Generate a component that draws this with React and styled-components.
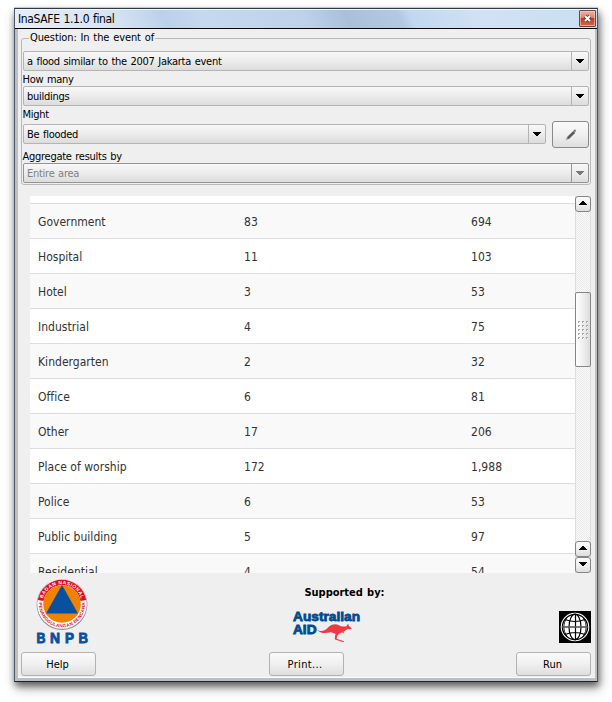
import React from "react";
import styled, { createGlobalStyle, css } from "styled-components";

const Global = createGlobalStyle`
  * { box-sizing: border-box; }
  body { margin: 0; background: #fff; overflow: hidden; }
`;

const ui = `"DejaVu Sans Condensed", "DejaVu Sans", sans-serif`;

const Page = styled.main`
  width: 612px;
  height: 702px;
  padding: 8px 14px 0;
  font: 11px/14px ${ui};
  font-stretch: condensed;
  letter-spacing: -0.27px;
  word-spacing: 0.8px;
  color: #000;
  white-space: nowrap;
`;

const Window = styled.section`
  width: 584px;
  height: 674px;
  border: 1px solid #303943;
  border-bottom-color: #222;
  border-left-color: #4c5865;
  border-right-color: #4c5865;
  background: #bcc0c3;
  padding: 0 1px 3px;
  display: flex;
  flex-direction: column;
  box-shadow: 0 -1px 0 #c8ccd0, 1px 4px 7px rgba(0, 0, 0, 0.55), 2px 7px 12px rgba(0, 0, 0, 0.22);
`;

const TitleBar = styled.header`
  height: 20px;
  flex: none;
  margin: 0 -1px;
  padding: 0 1px 0 3px;
  display: flex;
  justify-content: space-between;
  border-top: 1px solid #f3f8fc;
  border-bottom: 1px solid #000;
  background: linear-gradient(65deg, #e6eef7 0%, #d5e3f1 18%, #bbd1ea 26%, #c5d9ee 33%, #bdd2e9 50%, #a9c0db 57%, #b2c9e4 66%, #c1d8f0 68%, #d1e2f2 80%, #c8dff1 100%);
`;

const Title = styled.h1`
  margin: 1px 0 0;
  font: inherit;
  font-size: 12px;
  line-height: 16px;
  letter-spacing: -0.36px;
`;

const Close = styled.button`
  width: 17px;
  height: 17px;
  padding: 0;
  display: grid;
  place-items: center;
  border: 1px solid #6a4644;
  border-radius: 1px;
  background: linear-gradient(#eeb3a4, #de8068 45%, #bd3d20 50%, #d5694d);
  box-shadow: inset 0 0 0 1px rgba(255, 210, 195, 0.55);
`;

const Client = styled.div`
  flex: 1;
  min-height: 0;
  margin: 0 1px 0 2px;
  padding: 8px 3px 2px 3px;
  background: #efefef;
  border-bottom: 1px solid #fafafa;
  display: flex;
  flex-direction: column;
`;

const Group = styled.fieldset`
  flex: none;
  height: 154px;
  width: 570px;
  min-width: 0;
  margin: -6px 0 0;
  padding: 6px 1px 0;
  border: 1px solid #b9b9b9;
  border-radius: 3px;
  display: flex;
  flex-direction: column;
`;

const Legend = styled.legend`
  height: 14px;
  margin-left: 6px;
  padding: 0 1px;
  letter-spacing: -0.1px;
`;

const Label = styled.label`
  flex: none;
  height: ${(p) => p.$h}px;
  padding-top: ${(p) => p.$top}px;
  margin-left: -0.5px;
`;

const Select = styled.div`
  flex: none;
  width: ${(p) => p.$w || 566}px;
  height: 20px;
  display: flex;
  justify-content: space-between;
  align-items: center;
  padding-left: 3px;
  border: 1px solid ${(p) => (p.$off ? "#949494" : "#b4b4b4")};
  border-radius: 2px;
  background: linear-gradient(#f8f8f8, #ececec 50%, #dcdcdc);
  color: ${(p) => (p.$off ? "#808080" : "#000")};
`;

const Value = styled.span`
  padding-top: 2px;
`;

const Drop = styled.span`
  width: 17px;
  height: 18px;
  display: grid;
  place-items: center;
  border-left: 1px solid ${(p) => (p.$off ? "#949494" : "#b4b4b4")};
`;

const SelectRow = styled.div`
  flex: none;
  height: 27px;
  display: flex;
  align-items: flex-start;
  gap: 6px;
  ${Select} {
    margin-top: 3px;
  }
`;

const face = css`
  padding: 0;
  border-radius: 3px;
  background: linear-gradient(#fafafa, #f0f0f0 50%, #dedede);
  font: inherit;
  letter-spacing: inherit;
  color: inherit;
`;

const EditButton = styled.button`
  ${face}
  width: 37px;
  height: 27px;
  display: grid;
  place-items: center;
  border: 1px solid #8a8a8a;
`;

const Results = styled.div`
  flex: none;
  width: 562px;
  height: 377px;
  margin: 11px 0 0 9px;
  display: flex;
`;

const Table = styled.div`
  width: 545px;
  overflow: hidden;
  background: #fff;
  padding-top: 7px;
`;

const Row = styled.div`
  height: 35px;
  display: grid;
  grid-template-columns: 206px 227px 1fr;
  align-items: center;
  padding-left: 8px;
  padding-top: 1px;
  border-top: 1px solid #dcdcdc;
  background: ${(p) => (p.$odd ? "#f9f9f9" : "#fff")};
  color: #333;
  font-size: 12px;
  letter-spacing: 0.03px;
  word-spacing: 0;
`;

const ScrollBar = styled.div`
  width: 16px;
  display: flex;
  flex-direction: column;
  box-shadow: inset 1px 0 #ddd, inset -1px 0 #ddd;
  background: repeating-conic-gradient(#e9e9e9 0 25%, #fafafa 0 50%) 0 0 / 2px 2px;
`;

const Arrow = styled.button`
  ${face}
  flex: none;
  height: 16px;
  padding-bottom: 2px;
  display: grid;
  place-items: center;
  border: 1px solid #858585;
`;

const Thumb = styled.div`
  flex: none;
  height: 75px;
  margin: 80px 0 174px;
  display: grid;
  place-items: center;
  border: 1px solid #858585;
  border-radius: 2px;
  background: linear-gradient(90deg, #fff, #efefef 50%, #dcdcdc);
`;

const Footer = styled.footer`
  height: 79px;
  width: 570px;
  flex: none;
  display: grid;
  grid-template-columns: 75px 420px 75px;
`;

const Center = styled.div`
  display: flex;
  flex-direction: column;
  align-items: center;
  padding: 13px 0 0 77px;
`;

const Supported = styled.strong`
  height: 24px;
  font-weight: bold;
  letter-spacing: -0.02px;
`;

const AidLogo = styled.svg`
  margin-right: 36px;
`;

const Actions = styled.div`
  width: 570px;
  display: flex;
  justify-content: space-between;
`;

const Action = styled.button`
  ${face}
  width: 75px;
  height: 24px;
  padding: 1px 2px 0 0;
  letter-spacing: ${(p) => p.$track || 0}px;
  border: 1px solid #b2b2b2;
`;

const BnpbSlot = styled.div`
  padding: 5px 0 0 14px;
`;

const GlobeSlot = styled.div`
  padding: 38px 0 0 43px;
`;

const Triangle = ({ up, color = "#000" }) => (
  <svg width="8" height="4" viewBox="0 0 8 4" fill={color} shapeRendering="crispEdges">
    {up ? <path d="M3 0h2v1h1v1h1v1h1v1H0V3h1V2h1V1h1z" /> : <path d="M0 0h8v1H7v1H6v1H5v1H3V3H2V2H1V1H0z" />}
  </svg>
);

const Combo = ({ children, off, w }) => (
  <Select $off={off} $w={w}>
    <Value>{children}</Value>
    <Drop $off={off}><Triangle color={off ? "#777" : "#000"} /></Drop>
  </Select>
);

const Pencil = () => (
  <svg width="12" height="12" viewBox="0 0 12 12">
    <path d="M1.5 10.5l.8-2.8 6-5.6 1.900 1.900-6 5.700z" fill="#5c5c5c" />
    <path d="M8.300 1.700l1-1c.8-.6 2.200.8 1.600 1.600l-1 1z" fill="#777" />
    <path d="M.5 11.500l1.200-3 1.700 1.800z" fill="#aaa" />
  </svg>
);

const Grip = () => (
  <svg width="10" height="18" shapeRendering="crispEdges">
    {[0, 4, 8, 12, 16].map((y) =>
      [0, 4, 8].map((x) => (
        <g key={`${x}-${y}`}>
          <path d={`M${x} ${y}h2v1h-1v1h-1z`} fill="#aaa" />
          <path d={`M${x + 1} ${y + 1}h1v1h-1z`} fill="#fff" />
        </g>
      ))
    )}
  </svg>
);

const Bnpb = () => (
  <svg width="54" height="68" viewBox="0 0 54 68" fontFamily="Liberation Sans, sans-serif" fontWeight="bold" wordSpacing="0">
    <defs>
      <path id="upper" d="M7.2 26A19.8 19.8 0 0 1 46.8 26" />
      <path id="lower" d="M4.3 22A23.1 23.1 0 1 0 49.7 22" />
    </defs>
    <circle cx="27" cy="26.6" r="25.4" fill="#8a8a8a" />
    <circle cx="27" cy="26" r="24.8" fill="#fff" />
    <path d="M2.8 22A24.6 24.6 0 0 1 51.2 22L45.4 23A18.6 18.6 0 0 0 8.6 23z" fill="#e30b1c" />
    <circle cx="27" cy="26" r="18.8" fill="#f08200" />
    <path d="M27 7L43 35.500H11z" fill="#0850a0" />
    <text fontSize="4.9" fill="#fff" letterSpacing="0"><textPath href="#upper" startOffset="50%" textAnchor="middle" textLength="51">BADAN NASIONAL</textPath></text>
    <text fontSize="4.6" fill="#e30b1c" letterSpacing="0"><textPath href="#lower" startOffset="50%" textAnchor="middle" textLength="76">PENANGGULANGAN BENCANA</textPath></text>
    <text y="64.5" fontSize="14.5" fill="#0850a0" stroke="#0850a0" strokeWidth="0.9" letterSpacing="0">
      <tspan x="1.5" textLength="9" lengthAdjust="spacingAndGlyphs">B</tspan>
      <tspan x="15" textLength="10" lengthAdjust="spacingAndGlyphs">N</tspan>
      <tspan x="30" textLength="9" lengthAdjust="spacingAndGlyphs">P</tspan>
      <tspan x="43.5" textLength="9.5" lengthAdjust="spacingAndGlyphs">B</tspan>
    </text>
  </svg>
);

const AustralianAid = () => (
  <AidLogo width="70" height="34" viewBox="0 0 70 34" fontFamily="Liberation Sans, sans-serif" fontWeight="bold" fill="#004b91">
    <text x="1" y="11" fontSize="13" stroke="#004b91" strokeWidth="0.8" textLength="67" lengthAdjust="spacingAndGlyphs" letterSpacing="0">Australian</text>
    <text x="1" y="24" fontSize="13.5" stroke="#004b91" strokeWidth="0.9" textLength="23.5" lengthAdjust="spacingAndGlyphs" letterSpacing="0">AID</text>
    <path d="M25 20.300C30 22 33.500 20.500 36 17.600C39.500 14 43.500 13.600 47 15.200C49.500 16.600 52 16.700 54 16.400L56.200 13.800L56.800 16L60 18.200L58 19.200L55.500 19L53.500 20.500L51.500 21.700L52.500 23.800L50 22.300C47.500 24 45.500 24.200 45 26.800L44.600 28.700L52 31.200L51.500 32.200L43 29.500L42.800 27.700L43.500 23.800L39 22.200C34.500 23 30.500 24.400 25 20.300z" fill="#ee3a43" />
  </AidLogo>
);

const Globe = () => (
  <svg width="32" height="32" viewBox="0 0 32 32">
    <path d="M0 0h32v32H0z" fill="#000" />
    <circle cx="16" cy="16" r="14.3" fill="#fff" />
    <circle cx="16" cy="16" r="12.6" fill="#fff" stroke="#000" strokeWidth="1.3" />
    <g fill="none" stroke="#000" strokeWidth="1.2">
      <path d="M16.500 3v26M6 8.500Q16 12.500 26 8.500M6 23.500Q16 19.500 26 23.500" />
      <ellipse cx="16" cy="16" rx="6" ry="12.8" />
      <path d="M8 6.500Q1.500 16 8 25.500M24 6.500Q30.500 16 24 25.500" strokeWidth="0.8" />
    </g>
    <path d="M3 16h26" stroke="#555" strokeWidth="1.6" />
  </svg>
);

const rows = [
  ["Government", "83", "694"],
  ["Hospital", "11", "103"],
  ["Hotel", "3", "53"],
  ["Industrial", "4", "75"],
  ["Kindergarten", "2", "32"],
  ["Office", "6", "81"],
  ["Other", "17", "206"],
  ["Place of worship", "172", "1,988"],
  ["Police", "6", "53"],
  ["Public building", "5", "97"],
  ["Residential", "4", "54"],
];

export default function App() {
  return (
    <Page>
      <Global />
      <Window>
        <TitleBar>
          <Title>InaSAFE 1.1.0 final</Title>
          <Close aria-label="Close">
            <svg width="9" height="9" viewBox="0 0 9 9">
              <path d="M2 2l5 5M7 2L2 7" stroke="#503a42" strokeWidth="3.6" />
              <path d="M2 2l5 5M7 2L2 7" stroke="#fff" strokeWidth="1.9" />
            </svg>
          </Close>
        </TitleBar>
        <Client>
          <Group>
            <Legend>Question: In the event of</Legend>
            <Combo>a flood similar to the 2007 Jakarta event</Combo>
            <Label $h={15} $top={2}>How many</Label>
            <Combo>buildings</Combo>
            <Label $h={15} $top={2}>Might</Label>
            <SelectRow>
              <Combo w={523}>Be flooded</Combo>
              <EditButton aria-label="Edit"><Pencil /></EditButton>
            </SelectRow>
            <Label $h={15} $top={2}>Aggregate results by</Label>
            <Combo off>Entire area</Combo>
          </Group>
          <Results>
            <Table>
              {rows.map((cells, i) => (
                <Row key={cells[0]} $odd={i % 2 === 0}>
                  {cells.map((c, j) => <span key={j}>{c}</span>)}
                </Row>
              ))}
            </Table>
            <ScrollBar>
              <Arrow aria-label="Up"><Triangle up /></Arrow>
              <Thumb><Grip /></Thumb>
              <Arrow aria-label="Page up"><Triangle up /></Arrow>
              <Arrow aria-label="Down"><Triangle /></Arrow>
            </ScrollBar>
          </Results>
          <Footer>
            <BnpbSlot><Bnpb /></BnpbSlot>
            <Center>
              <Supported>Supported by:</Supported>
              <AustralianAid />
            </Center>
            <GlobeSlot><Globe /></GlobeSlot>
          </Footer>
          <Actions>
            <Action>Help</Action>
            <Action $track={0.35}>Print...</Action>
            <Action>Run</Action>
          </Actions>
        </Client>
      </Window>
    </Page>
  );
}
